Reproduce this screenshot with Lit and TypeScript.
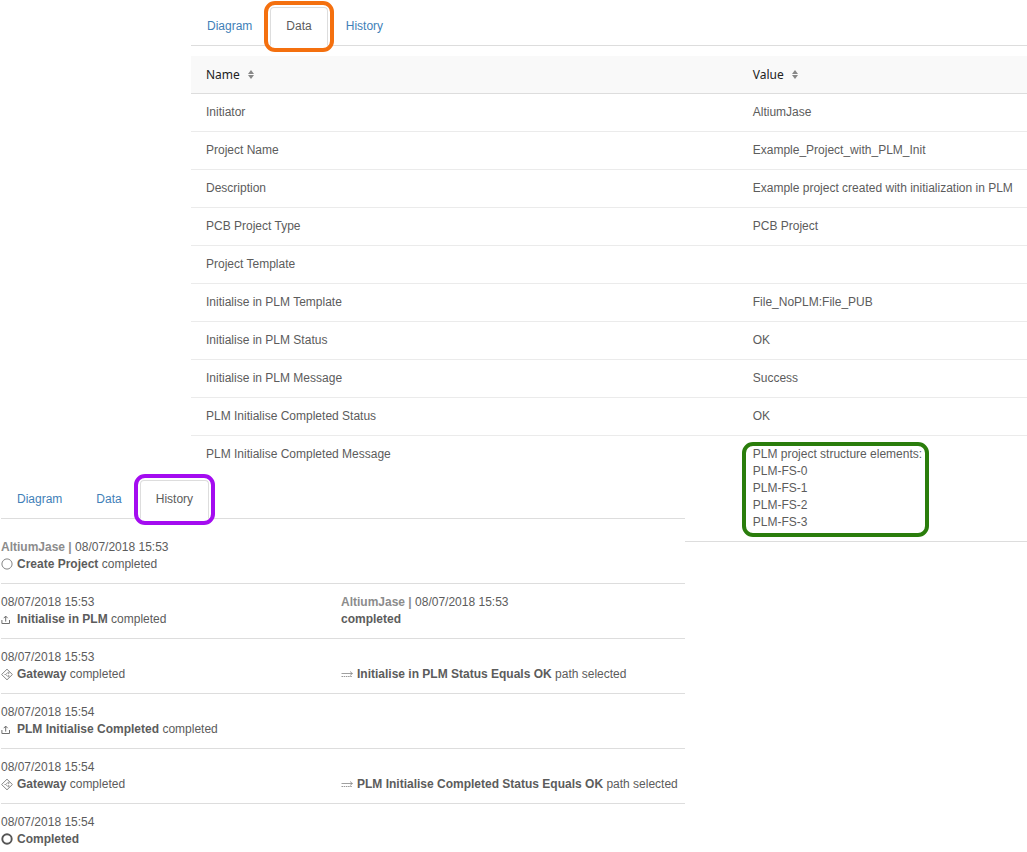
import { LitElement, html, svg, css, nothing } from "lit";
import { customElement, property } from "lit/decorators.js";

type IconName = "start" | "task" | "gateway" | "path" | "end";

const icons = {
  start: svg`<circle cx="6" cy="6" r="5.1" fill="none" stroke="#777" stroke-width="0.9"/>`,
  end: svg`<circle cx="6" cy="6" r="4.7" fill="none" stroke="#555" stroke-width="1.9"/>`,
  task: svg`<path d="M.9 7v3.5h7.6V7M4.7 8.6V3.2M2.7 5.2l2-2.1 2 2.1" fill="none" stroke="#707070" stroke-width="1"/>`,
  gateway: svg`<path d="M6 1.2L11.4 6.5 6 11.8.6 6.5z" fill="none" stroke="#777" stroke-width="0.9"/><path d="M3.4 6.5h1.1l1.9-1.6h1.8M4.5 6.5l1.9 1.6h1.8M7.2 3.9l1.1 1-1.1 1M7.2 7.1l1.1 1-1.1 1" fill="none" stroke="#777" stroke-width="0.7"/>`,
  path: svg`<path d="M.5 5.5h11M9 3.5l2.4 2L9 7.5" fill="none" stroke="#888" stroke-width="0.8"/><path d="M.5 8.5h11" stroke="#999" stroke-width="1" stroke-dasharray="1.5 0.7"/>`,
};

interface Entry {
  user?: string;
  time?: string;
  icon?: IconName;
  title?: string;
  text?: string;
}

const variables: [string, string[]][] = [
  ["Initiator", ["AltiumJase"]],
  ["Project Name", ["Example_Project_with_PLM_Init"]],
  ["Description", ["Example project created with initialization in PLM"]],
  ["PCB Project Type", ["PCB Project"]],
  ["Project Template", []],
  ["Initialise in PLM Template", ["File_NoPLM:File_PUB"]],
  ["Initialise in PLM Status", ["OK"]],
  ["Initialise in PLM Message", ["Success"]],
  ["PLM Initialise Completed Status", ["OK"]],
  [
    "PLM Initialise Completed Message",
    ["PLM project structure elements:", "PLM-FS-0", "PLM-FS-1", "PLM-FS-2", "PLM-FS-3"],
  ],
];

const events: Entry[][] = [
  [{ user: "AltiumJase", time: "08/07/2018 15:53", icon: "start", title: "Create Project", text: "completed" }],
  [
    { time: "08/07/2018 15:53", icon: "task", title: "Initialise in PLM", text: "completed" },
    { user: "AltiumJase", time: "08/07/2018 15:53", title: "completed" },
  ],
  [
    { time: "08/07/2018 15:53", icon: "gateway", title: "Gateway", text: "completed" },
    { icon: "path", title: "Initialise in PLM Status Equals OK", text: "path selected" },
  ],
  [{ time: "08/07/2018 15:54", icon: "task", title: "PLM Initialise Completed", text: "completed" }],
  [
    { time: "08/07/2018 15:54", icon: "gateway", title: "Gateway", text: "completed" },
    { icon: "path", title: "PLM Initialise Completed Status Equals OK", text: "path selected" },
  ],
  [{ time: "08/07/2018 15:54", icon: "end", title: "Completed" }],
];

@customElement("tab-bar")
export class TabBar extends LitElement {
  @property() active = "";

  static styles = css`
    :host { display: block; }
    .tabs { display: flex; gap: 2px; border-bottom: 1px solid #ddd; }
    .tab {
      position: relative;
      margin-bottom: -1px;
      padding: 10px 15px;
      border: 1px solid transparent;
      border-radius: 4px 4px 0 0;
      color: #3f7fb8;
      text-decoration: none;
    }
    .active { color: #5c5c5c; background: #fff; border-color: #ddd #ddd #fff; }
    .active::after {
      content: "";
      position: absolute;
      inset: -7px;
      border: 4px solid var(--mark);
      border-radius: 11px;
    }
  `;

  render() {
    return html`<nav class="tabs">
      ${["Diagram", "Data", "History"].map(
        (name) =>
          html`<a class="tab ${name === this.active ? "active" : ""}" href="#${name.toLowerCase()}"
            aria-current=${name === this.active ? "page" : nothing}>${name}</a>`
      )}
    </nav>`;
  }
}

@customElement("data-table")
export class DataTable extends LitElement {
  static styles = css`
    :host { display: block; }
    .table { width: 100%; table-layout: fixed; border-collapse: separate; border-spacing: 0; }
    .name { width: 65.4%; }
    th, td { box-sizing: border-box; padding: 10px 0 10px 15px; text-align: left; vertical-align: top; white-space: nowrap; border-bottom: 1px solid #ebebeb; }
    th { background: #f9f9f9; border-color: #ddd; font-weight: 400; }
    tr:last-child td { border-color: #ddd; }
    .sort {
      display: flex;
      align-items: center;
      gap: 8px;
      padding: 0;
      border: 0;
      background: none;
      color: #222;
      font: 12px/17px "Noto Sans", sans-serif;
    }
    .marked { position: relative; display: inline-block; vertical-align: top; }
    .marked::after {
      content: "";
      position: absolute;
      inset: -4px -7px -6px -11px;
      border: 4px solid #2a7d0c;
      border-radius: 11px;
    }
  `;

  private heading(label: string) {
    return html`<button class="sort" type="button">
      ${label}
      <svg width="6" height="9" viewBox="0 0 6 9" aria-hidden="true"><path d="M0 4L3 0l3 4zM0 5h6L3 9z" fill="#888"/></svg>
    </button>`;
  }

  render() {
    return html`<table class="table">
      <thead>
        <tr><th class="name" scope="col">${this.heading("Name")}</th><th scope="col">${this.heading("Value")}</th></tr>
      </thead>
      <tbody>
        ${variables.map(
          ([name, lines]) => html`<tr>
            <td>${name}</td>
            <td><div class=${lines.length > 1 ? "marked" : "plain"}>${lines.map((l) => html`<div>${l}</div>`)}</div></td>
          </tr>`
        )}
      </tbody>
    </table>`;
  }
}

@customElement("history-list")
export class HistoryList extends LitElement {
  static styles = css`
    :host { display: block; }
    .list { margin: 0; padding: 0; list-style: none; }
    .row { display: grid; grid-template-columns: 1fr 1fr; padding: 10px 4px 10px 0; border-bottom: 1px solid #ddd; }
    .row:last-child { border: 0; padding-bottom: 0; }
    .entry { white-space: nowrap; }
    .line { height: 17px; }
    .user { color: #8c8c8c; }
    .event { display: flex; gap: 4px; }
    .icon { flex: none; width: 12px; height: 12px; margin-top: 2px; }
  `;

  render() {
    return html`<ul class="list">
      ${events.map(
        (row) => html`<li class="row">
          ${row.map(
            (e) => html`<div class="entry">
              <div class="line">${e.user ? html`<b class="user">${e.user} |</b> ` : nothing}${e.time}</div>
              <div class="line event">
                ${e.icon
                  ? html`<svg class="icon" viewBox="0 0 12 12" aria-hidden="true">${icons[e.icon]}</svg>`
                  : nothing}
                <span><b>${e.title}</b> ${e.text}</span>
              </div>
            </div>`
          )}
        </li>`
      )}
    </ul>`;
  }
}

@customElement("app-root")
export class AppRoot extends LitElement {
  static styles = css`
    :host {
      display: block;
      overflow-x: hidden;
      background: #fff;
      color: #5c5c5c;
      font: 12px/17px "Liberation Sans", Arial, sans-serif;
    }
    .panel { display: flex; flex-direction: column; gap: 10px; padding-top: 7px; background: #fff; }
    .data { margin-left: 191px; }
    .data-tabs { --mark: #f4700f; }
    /* The history panel is laid over the lower left corner of the data panel. */
    .history {
      position: relative;
      box-sizing: border-box;
      width: 66.7%;
      margin-top: -69px;
      padding-left: 1px;
    }
    .history-tabs { --mark: #a40cf0; }
  `;

  render() {
    return html`
      <section class="panel data" aria-label="Data">
        <tab-bar class="data-tabs" active="Data"></tab-bar>
        <data-table></data-table>
      </section>
      <section class="panel history" aria-label="History">
        <tab-bar class="history-tabs" active="History"></tab-bar>
        <history-list></history-list>
      </section>
    `;
  }
}
